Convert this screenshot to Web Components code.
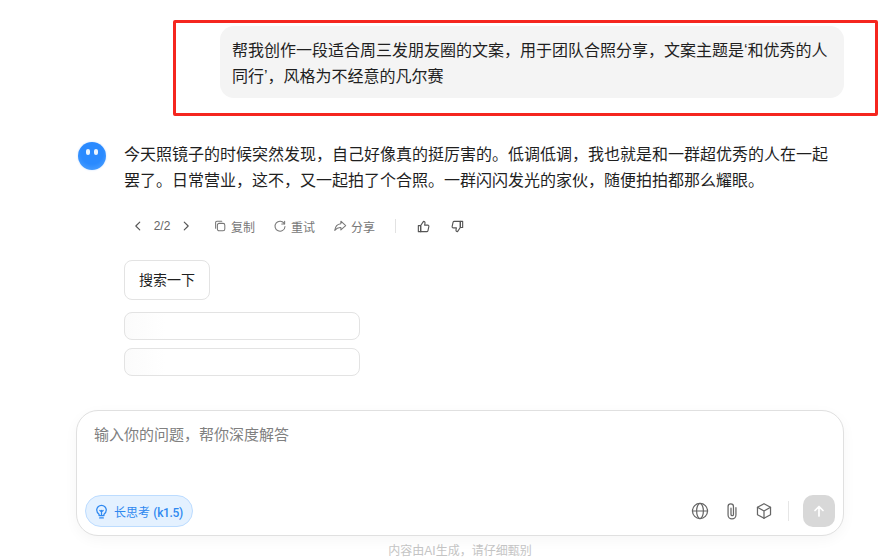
<!DOCTYPE html>
<html lang="zh">
<head>
<meta charset="utf-8">
<title>Chat</title>
<style>
  html,body{margin:0;height:100%;background:#fff;overflow:hidden}
  body{font-family:"Liberation Sans","Noto Sans CJK SC",sans-serif;color:#1f1f1f}
</style>
</head>
<body>
<chat-page>
  <user-bubble>帮我创作一段适合周三发朋友圈的文案，用于团队合照分享，文案主题是‘和优秀的人同行’，风格为不经意的凡尔赛</user-bubble>
  <bot-answer>今天照镜子的时候突然发现，自己好像真的挺厉害的。低调低调，我也就是和一群超优秀的人在一起罢了。日常营业，这不，又一起拍了个合照。一群闪闪发光的家伙，随便拍拍都那么耀眼。</bot-answer>
  <chat-composer slot="composer"></chat-composer>
</chat-page>

<script>
const icon = (d, size = 16, sw = 1.3) =>
  `<svg width="${size}" height="${size}" viewBox="0 0 16 16" fill="none" stroke="currentColor" stroke-width="${sw}" stroke-linecap="round" stroke-linejoin="round">${d}</svg>`;

// page column
class ChatPage extends HTMLElement {
  connectedCallback() {
    this.attachShadow({ mode: "open" }).innerHTML = `
      <style>
        :host{display:flex;flex-direction:column;height:559px;box-sizing:border-box;padding:26px 50px 0 76px}
        .thread{display:flex;flex-direction:column;flex:1;gap:42px}
      </style>
      <div class="thread"><slot></slot></div>
      <slot name="composer"></slot>`;
  }
}
customElements.define("chat-page", ChatPage);

// user's question, with the red highlight frame over it
class UserBubble extends HTMLElement {
  connectedCallback() {
    this.attachShadow({ mode: "open" }).innerHTML = `
      <style>
        :host{display:flex;justify-content:flex-end;position:relative}
        .bubble{width:624px;box-sizing:border-box;padding:12px 12px 8px;background:#f4f4f4;border-radius:14px;font-size:16px;line-height:26px}
        .mark{position:absolute;left:97px;right:-34px;top:-6px;height:96px;box-sizing:border-box;border:3px solid #f5261f;border-radius:2px;pointer-events:none}
      </style>
      <div class="bubble"><slot></slot></div>
      <div class="mark"></div>`;
  }
}
customElements.define("user-bubble", UserBubble);

// action row under an answer
class AnswerActions extends HTMLElement {
  connectedCallback() {
    const act = (d, t) => `<span class="act">${icon(d, 14, 1.2)}<span>${t}</span></span>`;
    this.attachShadow({ mode: "open" }).innerHTML = `
      <style>
        :host{display:flex;align-items:center;height:20px;color:#666;font-size:12px;padding-left:7px}
        .pager{display:flex;align-items:center;gap:8px;margin-right:20px}
        .pager svg{color:#555}
        .pager span{width:18px;text-align:center}
        .act{display:flex;align-items:center;gap:4px;margin-right:18px;color:#777}
        .sep{width:1px;height:14px;background:#e2e2e2;margin:0 20px 0 2px}
        .thumb{display:flex;margin-right:19px;color:#555}
      </style>
      <span class="pager">
        ${icon('<path d="M10 3.500 5.500 8l4.500 4.500"/>', 14)}<span>2/2</span>${icon('<path d="M6 3.500 10.500 8 6 12.500"/>', 14)}
      </span>
      ${act('<rect x="5" y="5" width="8.500" height="8.500" rx="2"/><path d="M3 10.500V4a1.500 1.500 0 0 1 1.500-1.500H10"/>', "复制")}
      ${act('<path d="M13 5.500A5.700 5.700 0 1 0 13.700 8.500"/><path d="M13.300 2.500v3.300H10"/>', "重试")}
      ${act('<path d="M9 2.500 14.500 7.500 9 12.500V9.800C6 9.500 4 10.500 2 13 2.500 9 5 6 9 5.500z"/>', "分享")}
      <span class="sep"></span>
      <span class="thumb">${icon('<path d="M5 7 8 2.500c1.200 0 1.800.8 1.600 2L9.200 6.500h3.300c.9 0 1.400.7 1.200 1.600l-1 4.500c-.2.6-.6.900-1.200.900H5z"/><path d="M2.500 7H5v6.500H2.500z"/>', 15, 1.2)}</span>
      <span class="thumb">${icon('<path d="M11 9 8 13.500c-1.200 0-1.800-.8-1.600-2L6.800 9.500H3.500c-.9 0-1.400-.7-1.200-1.600l1-4.500c.2-.6.6-.9 1.200-.9H11z"/><path d="M13.500 2.500H11V9h2.500z"/>', 15, 1.2)}</span>`;
  }
}
customElements.define("answer-actions", AnswerActions);

// avatar, answer text, actions and follow-up suggestions
class BotAnswer extends HTMLElement {
  connectedCallback() {
    this.attachShadow({ mode: "open" }).innerHTML = `
      <style>
        :host{display:grid;grid-template-columns:48px 1fr}
        .avatar{width:28px;height:28px;margin:2px 0 0 2px;border-radius:50%;background:radial-gradient(circle at 50% 40%,#2a8aff 0 50%,#58a8ff 100%);display:flex;justify-content:center;gap:4px;padding-top:7px;box-sizing:border-box;box-shadow:0 0 2px rgba(60,140,255,.3)}
        .avatar i{width:4px;height:6px;border-radius:2px;background:#eaf4ff}
        .text{font-size:16px;line-height:26px;width:708px;padding-top:2px}
        answer-actions{margin-top:22px}
        .follow{display:flex;flex-direction:column;align-items:flex-start;gap:8px;margin-top:24px}
        .chip{box-sizing:border-box;border:1px solid #e3e3e3;border-radius:8px;background:#fff}
        .search{height:40px;width:86px;font-size:14px;line-height:38px;text-align:center;margin-bottom:4px}
        .empty{width:236px;height:28px;background:linear-gradient(90deg,#fbfbfb 0,#fff 40px)}
      </style>
      <div><div class="avatar"><i></i><i></i></div></div>
      <div>
        <div class="text"><slot></slot></div>
        <answer-actions></answer-actions>
        <div class="follow">
          <div class="chip search">搜索一下</div>
          <div class="chip empty"></div>
          <div class="chip empty"></div>
        </div>
      </div>`;
  }
}
customElements.define("bot-answer", BotAnswer);

// input box and footer note
class ChatComposer extends HTMLElement {
  connectedCallback() {
    this.attachShadow({ mode: "open" }).innerHTML = `
      <style>
        :host{display:block}
        .box{height:126px;box-sizing:border-box;border:1px solid #e0e0e0;border-radius:22px;background:#fff;box-shadow:0 4px 14px rgba(0,0,0,.04);padding:13px 8px 8px 8px;display:flex;flex-direction:column;justify-content:space-between}
        .hint{font-size:15px;line-height:22px;color:#808080;padding-left:9px}
        .bar{display:flex;align-items:center}
        .think{display:flex;align-items:center;gap:4px;height:32px;box-sizing:border-box;padding:0 9px 0 7px;border:1px solid #bcdcff;border-radius:16px;background:#e4f1ff;color:#2e88f0;font-size:12px}
        .think b{font-family:Roboto,sans-serif;font-weight:500;font-size:12px;letter-spacing:-.35px}
        .tools{margin-left:auto;display:flex;align-items:center;gap:14px;color:#666}
        .tools svg{display:block}
        .sep{width:1px;height:20px;background:#e6e6e6;margin-left:1px}
        .send{width:32px;height:32px;border-radius:10px;background:#d8d8d8;color:#fff;display:flex;align-items:center;justify-content:center}
        .note{font-size:12px;line-height:16px;color:#c4c4c4;text-align:center;margin-top:7px}
      </style>
      <div class="box">
        <div class="hint">输入你的问题，帮你深度解答</div>
        <div class="bar">
          <span class="think">
            ${icon('<path d="M5.700 10.500C4.400 9.600 3.500 8.300 3.500 6.700a4.500 4.500 0 0 1 9 0c0 1.600-.9 2.900-2.200 3.800v1.300H5.700z"/><path d="M6.300 14h3.400"/><path d="M8 7v4.500M6.500 7 8 8.300 9.500 7"/>', 17, 1.2)}
            <span>长思考 <b>(k1.5)</b></span>
          </span>
          <span class="tools">
            ${icon('<circle cx="8" cy="8" r="6.700"/><ellipse cx="8" cy="8" rx="3" ry="6.700"/><path d="M1.300 8h13.400"/>', 18, 1.1)}
            ${icon('<path d="M11.500 5v6.500a3.500 3.500 0 0 1-7 0V4a2.400 2.400 0 0 1 4.800 0v7a1.100 1.100 0 0 1-2.200 0V5.500"/>', 18, 1.1)}
            ${icon('<path d="M8 1.500 13.800 4.700v6.600L8 14.500 2.200 11.300V4.700z"/><path d="M2.200 4.700 8 8l5.800-3.300M8 8v6.500"/>', 18, 1.1)}
            <span class="sep"></span>
            <span class="send">${icon('<path d="M8 13V3.500M4 7.500 8 3.500l4 4"/>', 16, 1.7)}</span>
          </span>
        </div>
      </div>
      <div class="note">内容由AI生成，请仔细甄别</div>`;
  }
}
customElements.define("chat-composer", ChatComposer);
</script>
</body>
</html>
